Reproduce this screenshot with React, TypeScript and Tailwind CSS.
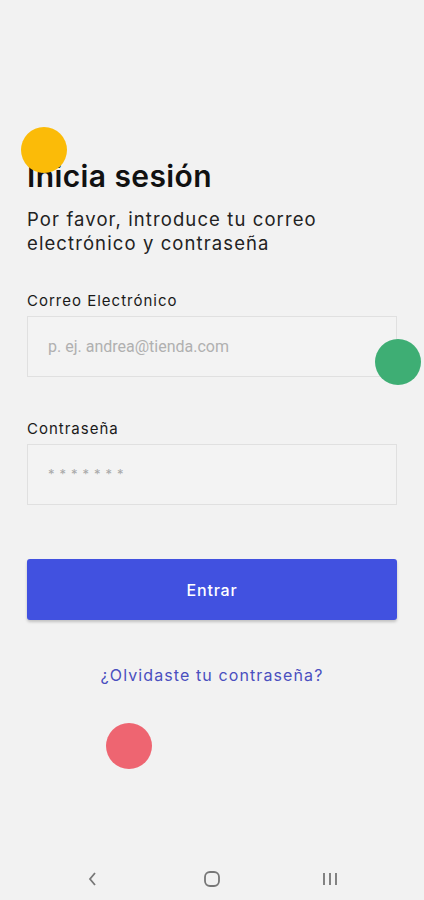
const font = { fontFamily: '"Inter", "Noto Sans", sans-serif' };

const Dot = ({ className }: { className: string }) => (
  <span className={`absolute rounded-full w-[46px] h-[46px] ${className}`} />
);

const Field = ({
  label,
  children,
}: {
  label: string;
  children: React.ReactNode;
}) => (
  <div className="flex flex-col">
    <label className="text-[15px] text-[#1a1a1a] leading-5 tracking-[1px]">{label}</label>
    <div className="mt-[5px] h-[61px] border border-[#e0e0e0] bg-[#f3f3f3] flex items-center px-5">
      {children}
    </div>
  </div>
);

export default function App() {
  return (
    <div
      className="relative w-[424px] h-[900px] bg-[#f2f2f2] overflow-hidden flex flex-col"
      style={font}
    >
      <div className="flex flex-col px-[27px] pt-[158px]">
        <h1 className="text-[30px] font-semibold text-[#111] leading-9 tracking-[0.4px]">
          Inicia sesión
        </h1>
        <p className="mt-[13px] text-[18.5px] leading-6 text-[#222] tracking-[1.1px]">
          Por favor, introduce tu correo
          <br />
          electrónico y contraseña
        </p>

        <div className="mt-[36px]">
          <Field label="Correo Electrónico">
            <span
              className="text-[16px] text-[#b0b0b0]"
              style={{ fontFamily: "Roboto, sans-serif" }}
            >
              p. ej. andrea@tienda.com
            </span>
          </Field>
        </div>

        <div className="mt-[42px]">
          <Field label="Contraseña">
            <span className="text-[13px] text-[#a8a8a8] tracking-[5px]">
              *******
            </span>
          </Field>
        </div>

        <button className="mt-[54px] h-[61px] w-full rounded-[3px] bg-[#4151e0] text-white text-[16px] font-medium tracking-[0.8px] shadow-[0_2px_3px_rgba(0,0,0,0.2)]">
          Entrar
        </button>

        <a className="mt-[43px] text-center text-[16px] text-[#4a4fbf] tracking-[1.1px]">
          ¿Olvidaste tu contraseña?
        </a>
      </div>

      <div className="mt-auto h-[46px] flex items-center justify-between pl-[86px] pr-[84px] pt-1">
        <svg width="14" height="18" viewBox="0 0 14 18">
          <path d="M9 3 L4 9 L9 15" fill="none" stroke="#777" strokeWidth="1.8" />
        </svg>
        <svg width="20" height="18" viewBox="0 0 20 18" className="ml-1">
          <rect x="3" y="2" width="14" height="14" rx="5" fill="none" stroke="#777" strokeWidth="1.8" />
        </svg>
        <svg width="20" height="18" viewBox="0 0 20 18">
          <path d="M4 3v12M10 3v12M16 3v12" stroke="#777" strokeWidth="1.8" />
        </svg>
      </div>

      <Dot className="left-[21px] top-[127px] bg-[#fbbb08]" />
      <Dot className="left-[375px] top-[339px] bg-[#3eae74]" />
      <Dot className="left-[106px] top-[723px] bg-[#ee6571]" />
    </div>
  );
}
